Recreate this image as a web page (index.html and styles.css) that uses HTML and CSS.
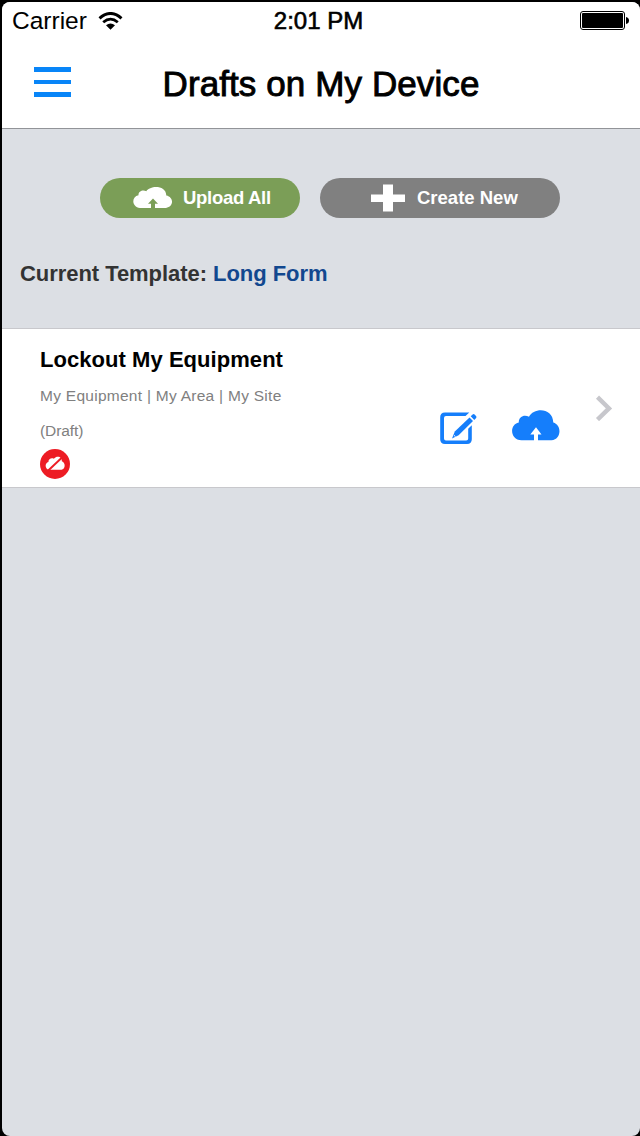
FILE: index.html
```html
<!DOCTYPE html>
<html lang="en">
<head>
    <meta charset="UTF-8">
    <meta name="viewport" content="width=device-width, initial-scale=1.0">
    <title>Drafts on My Device</title>
    <link rel="stylesheet" href="styles.css">
</head>
<body>
    <div class="screen">
        <header class="header">
            <div class="status-bar">
                <div class="carrier">
                    <span>Carrier</span>
                    <svg class="wifi" width="25" height="18" viewBox="0 0 25 18">
                        <path d="M1.5 6.3Q12.5 -3.3 23.5 6.3" fill="none" stroke="#000" stroke-width="3"/>
                        <path d="M5.2 10.2Q12.5 4 19.8 10.2" fill="none" stroke="#000" stroke-width="2.8"/>
                        <path d="M8 13.3Q12.5 9.6 17 13.3L12.5 17.8Z"/>
                    </svg>
                </div>
                <div class="time">2:01 PM</div>
                <svg class="battery" width="50" height="20" viewBox="0 0 50 20">
                    <rect x="0.5" y="0.5" width="44" height="18" rx="2.5" fill="#fff" stroke="#000"/>
                    <rect x="2" y="2" width="41" height="15" rx="1"/>
                    <path d="M46 6Q49 6.5 49 9.5T46 13Z"/>
                </svg>
            </div>
            <div class="nav-bar">
                <button class="menu-button" aria-label="Menu">
                    <span></span>
                    <span></span>
                    <span></span>
                </button>
                <h1>Drafts on My Device</h1>
            </div>
        </header>

        <div class="actions">
            <button class="pill upload">
                <svg width="40" height="22" viewBox="0 0 40 22">
                    <path fill="#fff" d="M7 21C-1.5 20-1.8 9.5 5.5 8.2C5.2 4.2 10 2.3 13.3 4.3C17-1.7 33-2.3 33.3 8.5C41 10 41 20 33 21H22V16.7H25L20 11.5L15 16.7H18V21Z"/>
                </svg>
                <span>Upload All</span>
            </button>
            <button class="pill create">
                <svg width="34" height="28" viewBox="0 0 34 28">
                    <path fill="#fff" d="M12 .5H22V10.5H34V18H22V27.5H12V18H0V10.5H12Z"/>
                </svg>
                <span>Create New</span>
            </button>
        </div>

        <p class="template">Current Template: <a>Long Form</a></p>

        <div class="draft">
            <div class="draft-info">
                <h2>Lockout My Equipment</h2>
                <p>My Equipment | My Area | My Site</p>
                <p class="state">(Draft)</p>
                <svg class="offline" width="30" height="30" viewBox="0 0 30 30">
                    <circle cx="15" cy="15" r="15" fill="#ed1c24"/>
                    <path fill="#fff" d="M8.8 20.8C4.6 19.8 4.8 13.8 8.4 13C8.4 9.8 11.6 8.6 13.8 9.8C17 6 22.4 7.8 21.8 12.3C26 14 25.4 20.4 21.5 20.8Z"/>
                    <path d="M8 21.8L22 8.5" stroke="#ed1c24" stroke-width="1.9"/>
                </svg>
            </div>
            <div class="draft-actions">
                <svg class="edit" width="38" height="34" viewBox="0 0 38 34">
                    <path d="M29.3 .4H5Q.2 .4 .2 5.2V27.3Q.2 32.1 5 32.1H27Q31.8 32.1 31.8 27.3V13.2L28.2 16.8V26.5Q28.2 28.5 26.2 28.5H6Q4 28.5 4 26.5V6Q4 4 6 4H25.5Z" fill="#157efb"/>
                    <path d="M12 26.4L14.8 19.4L29.5 5.4L33 9L18.6 23.2Z" fill="#157efb"/>
                    <path d="M30.7 4.3L32.6 2.4Q33.6 1.6 34.6 2.6L36 4Q37 5 36.1 6.1L34.3 7.9Z" fill="#157efb"/>
                    <path d="M14 23.3L15.5 24.7" stroke="#fff"/>
                </svg>
                <svg class="cloud" width="48" height="31" viewBox="0 0 48 31">
                    <path fill="#157efb" d="M9.5 30.2C-2 30-3 14.5 6.8 12.5C6.5 6.5 12.5 4 17 6.8C22-3 41-2.5 41.3 12.6C50.5 15.5 49 29.5 39.5 30.2H26V24.5H29.5L24 17.3L18.3 24.5H22V30.2Z"/>
                </svg>
            </div>
            <svg class="chevron" width="18" height="26" viewBox="0 0 18 26">
                <path d="M2.5 2.2L14 13.4L2.5 24.6" fill="none" stroke="#c7c7cc" stroke-width="4.4"/>
            </svg>
        </div>
    </div>
</body>
</html>
```
FILE: styles.css
```css
* {
    box-sizing: border-box;
}
body {
    margin: 0;
    background-color: #000;
    font-family: "Liberation Sans", Arial, sans-serif;
}
h1, h2, p {
    margin: 0;
}
button {
    border: none;
    font-family: inherit;
    cursor: pointer;
}
svg {
    display: block;
}
.screen {
    height: 1134px;
    margin: 2px 0 0 2px;
    background-color: #dcdfe4;
    border-radius: 8px;
    overflow: hidden;
}
.header {
    height: 127px;
    background-color: #fff;
    border-bottom: 1px solid #929498;
}
.status-bar {
    display: grid;
    grid-template-columns: 1fr auto 1fr;
    align-items: center;
    height: 38px;
    padding: 0 10px;
}
.carrier {
    display: flex;
    align-items: center;
    gap: 11px;
    font-size: 24.5px;
}
.time {
    padding-right: 5px;
    font-size: 24px;
    -webkit-text-stroke: 0.6px #000;
}
.battery {
    justify-self: end;
}
.nav-bar {
    display: grid;
    grid-template-columns: 69px 1fr 69px;
    align-items: center;
    height: 88px;
}
.menu-button {
    display: flex;
    flex-direction: column;
    gap: 8px;
    width: 37px;
    margin: 0 0 4px 32px;
    padding: 0;
    background: none;
}
.menu-button span {
    height: 4.7px;
    background-color: #0885f8;
}
.nav-bar h1 {
    font-size: 35px;
    font-weight: normal;
    letter-spacing: 0.1px;
    text-align: center;
    -webkit-text-stroke: 0.9px #000;
}
.actions {
    display: flex;
    gap: 20px;
    padding: 49px 0 0 98px;
}
.pill {
    display: flex;
    align-items: center;
    height: 40px;
    border-radius: 20px;
    color: #fff;
    font-size: 18.5px;
    font-weight: bold;
    white-space: nowrap;
}
.upload {
    width: 200px;
    padding: 0 0 0 33px;
    gap: 10px;
    background-color: #7b9e57;
    letter-spacing: -0.3px;
}
.create {
    width: 240px;
    padding: 0 0 0 51px;
    gap: 12px;
    background-color: #808080;
}
.template {
    padding: 43px 0 0 18px;
    height: 110px;
    color: #333;
    font-size: 22px;
    font-weight: bold;
    letter-spacing: -0.05px;
    line-height: 25px;
}
.template a {
    color: #12488f;
}
.draft {
    display: flex;
    height: 160px;
    padding: 0 27px 0 38px;
    background-color: #fff;
    border-top: 1px solid #c8c8cc;
    border-bottom: 1px solid #c8c8cc;
}
.draft-info {
    flex: 1;
    padding-top: 18px;
}
.draft-info h2 {
    margin-bottom: 11px;
    font-size: 22px;
    letter-spacing: 0.05px;
    line-height: 25px;
}
.draft-info p {
    height: 35px;
    color: #808080;
    font-size: 15.5px;
    letter-spacing: 0.27px;
    line-height: 26px;
}
.draft-info .state {
    letter-spacing: -0.1px;
}
.offline {
    margin-top: -4px;
}
.draft-actions {
    display: flex;
    align-items: flex-start;
    gap: 34px;
    padding-top: 81px;
}
.edit {
    margin-top: 2px;
}
.chevron {
    margin: 66px 0 0 35px;
}
```
